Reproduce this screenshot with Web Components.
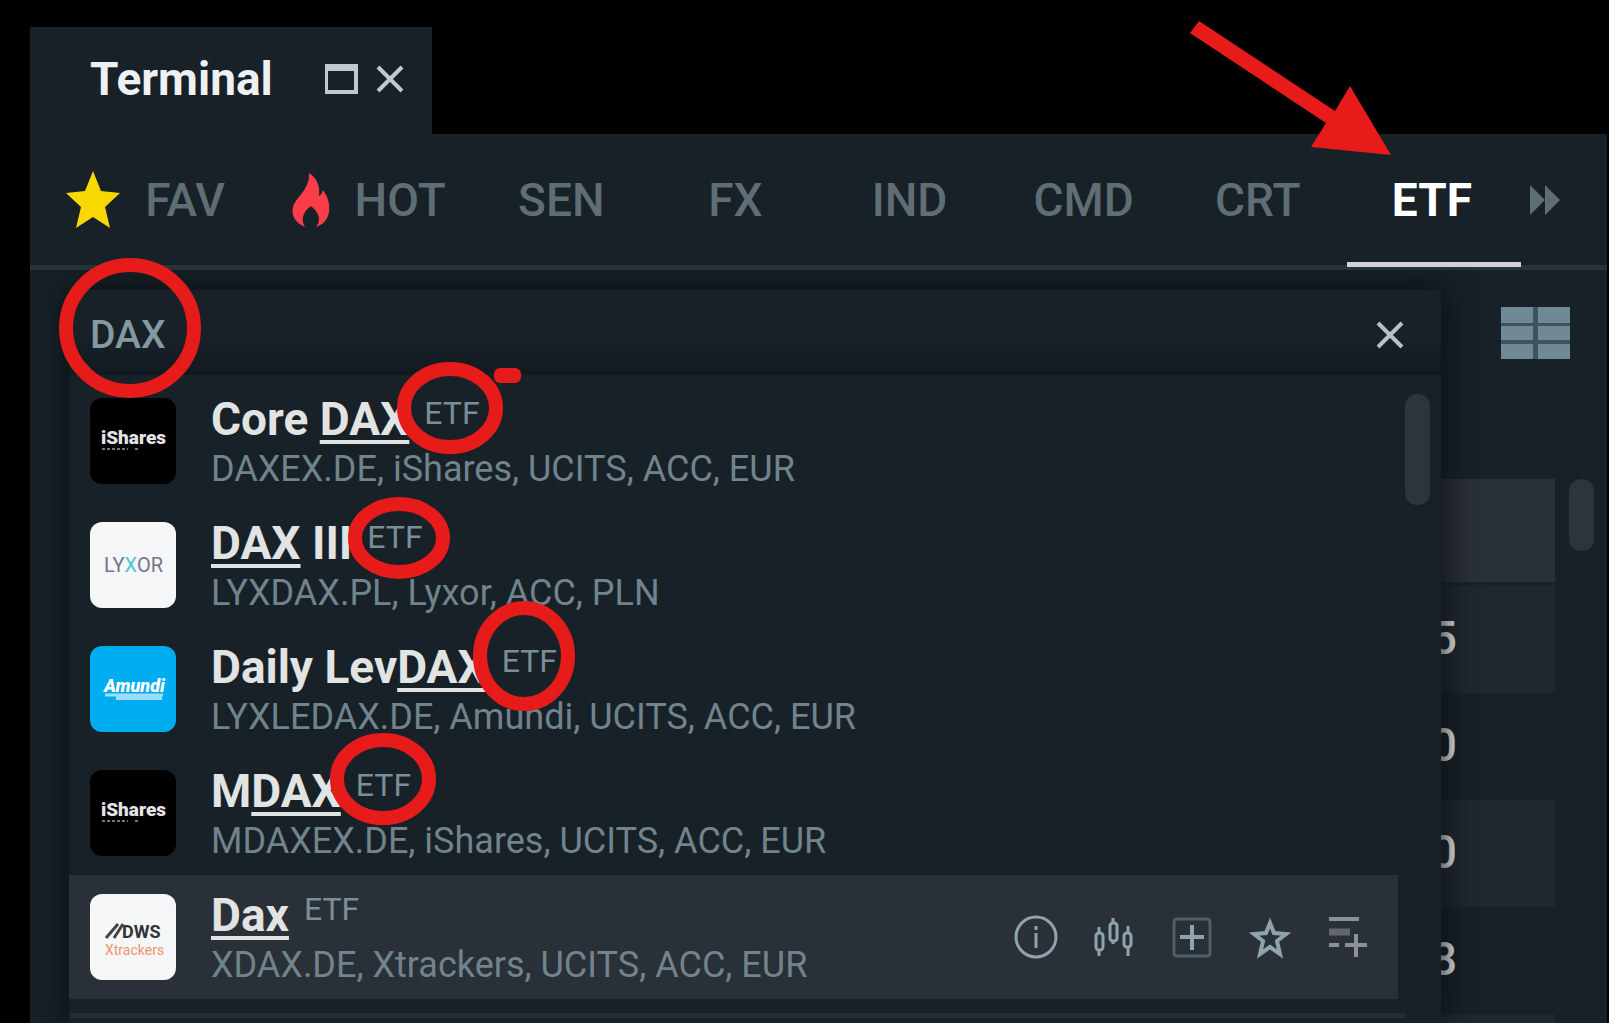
<!DOCTYPE html>
<html lang="en">
<head>
<meta charset="utf-8">
<title>Terminal</title>
<style>
    html, body{
        margin: 0;
        height: 100%;
    }
    body{
        background: #000;
        overflow: hidden;
        font-family: Roboto, "Liberation Sans", sans-serif;
    }
</style>
</head>
<body>
<terminal-window></terminal-window>

<script>
    const ICONS = {
        star: `<svg width="56" height="60" viewBox="0 0 56 60"><path fill="#f8d800" d="M28 1l8 20 19 2-15 14 5 21-17-11-17 11 5-21L1 23l19-2z"/></svg>`,
        flame: `<svg width="40" height="56" viewBox="0 0 40 56"><path fill="#fb3d4a" d="M18 1c9 6 11 14 10 23 2-1 3-3 4-6 5 7 7 14 6 22-1 7-6 13-13 15 5-6 4-14-5-21-9 6-10 15-6 21C4 51 0 43 2 35c2-9 17-17 16-34z"/></svg>`,
        close: `<svg width="28" height="28" viewBox="0 0 28 28"><path stroke="currentColor" stroke-width="4" d="M2 2l24 24M26 2L2 26"/></svg>`,
        more: `<svg width="32" height="30" viewBox="0 0 32 30"><path fill="currentColor" d="M1 0l15 15L1 30zM16 0l15 15-15 15z"/></svg>`
    };

    class terminalWindow extends HTMLElement {

        constructor() {
            super();
            this.attachShadow({ mode: "open" });
        }

        connectedCallback() {
            this.shadowRoot.innerHTML = `
            <style>
                :host{
                    display: flex;
                    flex-direction: column;
                    box-sizing: border-box;
                    height: 100vh;
                    padding: 27px 2px 0 30px;
                    overflow: hidden;
                    position: relative;
                }
                .body{
                    display: grid;
                    grid-template-columns: minmax(0, 1fr) 166px;
                    flex: 1;
                    min-height: 0;
                    background: #172127;
                }
                search-panel{
                    margin: 20px 0 0 39px;
                    z-index: 1;
                }
            </style>
            <window-title>Terminal</window-title>
            <market-tabs></market-tabs>
            <div class="body">
                <search-panel></search-panel>
                <quote-list></quote-list>
            </div>
            <marker-layer></marker-layer>`;
        }
    }

    class windowTitle extends HTMLElement {

        constructor() {
            super();
            this.attachShadow({ mode: "open" });
            this.shadowRoot.innerHTML = `
            <style>
                :host{
                    display: flex;
                    align-items: center;
                    align-self: flex-start;
                    box-sizing: border-box;
                    width: 402px;
                    height: 107px;
                    padding: 0 28px 4px 60px;
                    background: #172127;
                    color: #c3c8cb;
                }
                h1{
                    flex: 1;
                    margin: 0;
                    font-size: 46px;
                    line-height: 52px;
                    font-weight: 700;
                    color: #eef0f1;
                }
                button{
                    display: flex;
                    margin: 0 0 0 18px;
                    padding: 0;
                    border: 0;
                    background: none;
                    color: inherit;
                }
            </style>
            <h1><slot></slot></h1>
            <button aria-label="Maximize"><svg width="34" height="30" viewBox="0 0 34 30"><path fill="currentColor" fill-rule="evenodd" d="M1 0h33v30H1zM4 7v19h26V7z"/></svg></button>
            <button aria-label="Close">${ICONS.close}</button>`;
        }
    }

    class marketTabs extends HTMLElement {

        constructor() {
            super();
            this.attachShadow({ mode: "open" });
        }

        connectedCallback() {
            const tabs = ["FAV", "HOT", "SEN", "FX", "IND", "CMD", "CRT", "ETF"];
            const icons = { FAV: ICONS.star, HOT: ICONS.flame };
            this.shadowRoot.innerHTML = `
            <style>
                :host{
                    display: block;
                    background: #172127;
                }
                nav{
                    display: grid;
                    grid-template-columns: 234fr 212fr repeat(6, 174fr) 86fr;
                    height: 131px;
                    border-bottom: 5px solid #283239;
                }
                button{
                    display: flex;
                    align-items: center;
                    justify-content: center;
                    gap: 24px;
                    margin: 0 0 -5px;
                    padding: 0 4px 5px 0;
                    border: 0;
                    background: none;
                    font: 500 46px/52px Roboto, "Liberation Sans", sans-serif;
                    color: #5f6d74;
                }
                button.active{
                    font-weight: 700;
                    color: #fff;
                    background: linear-gradient(#d0d2d3, #d0d2d3) 0 128px / 100% 5px no-repeat;
                }
                .more{
                    justify-content: flex-start;
                    padding-left: 8px;
                }
            </style>
            <nav>
                ${tabs.map(t => `<button class="${t === "ETF" ? "active" : ""}">${icons[t] || ""}<span>${t}</span></button>`).join("")}
                <button class="more" aria-label="More">${ICONS.more}</button>
            </nav>`;
        }
    }

    class searchPanel extends HTMLElement {

        constructor() {
            super();
            this.attachShadow({ mode: "open" });
            this.shadowRoot.innerHTML = `
            <style>
                :host{
                    display: flex;
                    flex-direction: column;
                    background: #172127;
                    box-shadow: 0 0 30px 4px #0c1216;
                    clip-path: inset(-20px -40px 0 -39px);
                }
                .search{
                    display: flex;
                    align-items: center;
                    box-sizing: border-box;
                    height: 85px;
                    padding: 4px 37px 0 21px;
                    background: linear-gradient(#172127 55%, #111a20);
                    color: #b9bfc2;
                }
                input{
                    flex: 1;
                    min-width: 0;
                    padding: 0;
                    border: 0;
                    outline: 0;
                    background: none;
                    font: 500 39px/48px Roboto, "Liberation Sans", sans-serif;
                    color: #8599a3;
                }
                button{
                    display: flex;
                    padding: 0;
                    border: 0;
                    background: none;
                    color: inherit;
                }
                .results{
                    display: grid;
                    grid-template-columns: minmax(0, 1fr) 36px;
                    column-gap: 7px;
                    padding-top: 4px;
                }
                .thumb{
                    width: 25px;
                    height: 111px;
                    margin-top: 15px;
                    border-radius: 12px;
                    background: #2b353b;
                }
                .next{
                    height: 5px;
                    margin: 14px 36px 0 0;
                    background: #232d33;
                }
            </style>
            <div class="search">
                <input type="text" value="DAX" aria-label="Search instrument">
                <button aria-label="Clear">${ICONS.close}</button>
            </div>
            <div class="results">
                <div>
                    <result-row logo="ishares" info="DAXEX.DE, iShares, UCITS, ACC, EUR">Core <u>DAX</u></result-row>
                    <result-row logo="lyxor" info="LYXDAX.PL, Lyxor, ACC, PLN"><u>DAX</u> III</result-row>
                    <result-row logo="amundi" info="LYXLEDAX.DE, Amundi, UCITS, ACC, EUR">Daily Lev<u>DAX</u></result-row>
                    <result-row logo="ishares" info="MDAXEX.DE, iShares, UCITS, ACC, EUR">M<u>DAX</u></result-row>
                    <result-row logo="dws" info="XDAX.DE, Xtrackers, UCITS, ACC, EUR" selected><u>Dax</u></result-row>
                </div>
                <div class="thumb"></div>
            </div>
            <div class="next"></div>`;
        }
    }

    class issuerLogo extends HTMLElement {

        constructor() {
            super();
            this.attachShadow({ mode: "open" });
        }

        connectedCallback() {
            const logos = {
                ishares: { bg: "#000", art: `<text x="11" y="46" font-size="19" font-weight="900" fill="#e4e4e4">iShares</text><path stroke="#777" stroke-width="2" stroke-dasharray="3 2" d="M12 51h26M45 51h3"/>` },
                lyxor: { bg: "#f5f6f8", art: `<text x="14" y="50" font-size="20" fill="#77738f">LY<tspan fill="#52c5d8">X</tspan>OR</text>` },
                amundi: { bg: "#00adf0", art: `<text x="14" y="46" font-size="18" font-weight="900" font-style="italic" fill="#fff">Amundi</text><path stroke="#9fdcf7" stroke-width="3" d="M15 49h58"/><path stroke="#9fdcf7" stroke-width="4" d="M26 52h46"/>` },
                dws: { bg: "#f5f6f8", art: `<path stroke="#444" stroke-width="3" fill="none" d="M16 44l12-14M24 44l9-14"/><text x="32" y="44" font-size="18" font-weight="700" fill="#333">DWS</text><text x="15" y="61" font-size="14" fill="#f2936a">Xtrackers</text>` }
            };
            const logo = logos[this.getAttribute("name")];
            this.shadowRoot.innerHTML = `
            <style>
                :host{
                    display: block;
                    width: 86px;
                    height: 86px;
                    border-radius: 12px;
                    overflow: hidden;
                    background: ${logo.bg};
                }
                svg{ display: block; }
            </style>
            <svg width="86" height="86" viewBox="0 0 86 86">${logo.art}</svg>`;
        }
    }

    class resultRow extends HTMLElement {

        constructor() {
            super();
            this.attachShadow({ mode: "open" });
        }

        getActions() {
            return `
            <div class="actions">
                <button aria-label="Info"><svg viewBox="0 0 44 44"><circle cx="22" cy="22" r="20"/><path d="M22 11v4M22 18v15"/></svg></button>
                <button aria-label="Chart"><svg viewBox="0 0 44 44"><rect x="4" y="18" width="7" height="17" rx="3"/><rect x="18" y="8" width="7" height="18" rx="3"/><rect x="32" y="18" width="7" height="14" rx="3"/><path d="M7 12v6M7 35v6M21 3v5M21 26v3M36 11v7M36 32v9"/></svg></button>
                <button aria-label="Order"><svg viewBox="0 0 44 44"><rect x="4" y="4" width="36" height="37" rx="3" stroke="#4d6068"/><path stroke-width="4" d="M22 10v25M10 22h24"/></svg></button>
                <button aria-label="Favourite"><svg viewBox="0 0 44 44"><path stroke-width="4" d="M22 8l4 10 12 1-9 7 3 13-10-7-10 7 3-13-9-7 12-1z"/></svg></button>
                <button aria-label="Add to list"><svg viewBox="0 0 44 44"><path stroke="#8e9295" stroke-width="4" d="M3 4h30M3 30h10"/><path stroke="#62676b" stroke-width="7" d="M3 17h21"/><path stroke="#8e9295" stroke-width="4" d="M19 30h22M30 19v23"/></svg></button>
            </div>`;
        }

        connectedCallback() {
            this.shadowRoot.innerHTML = `
            <style>
                :host{
                    display: flex;
                    align-items: center;
                    box-sizing: border-box;
                    height: 124px;
                    padding: 0 28px 0 21px;
                    gap: 35px;
                }
                :host([selected]){
                    background: #2a3037;
                }
                .text{
                    flex: 1;
                    padding-top: 4px;
                }
                h3{
                    display: flex;
                    gap: 15px;
                    margin: 0;
                    font-size: 46px;
                    line-height: 52px;
                    font-weight: 700;
                    color: #e2e3e3;
                }
                ::slotted(u){
                    text-decoration-thickness: 4px;
                    text-underline-offset: 5px;
                    text-decoration-skip-ink: none;
                }
                small{
                    font-size: 32px;
                    line-height: 40px;
                    font-weight: 400;
                    color: #7b8e97;
                }
                p{
                    margin: 0;
                    font-size: 36px;
                    line-height: 48px;
                    color: #71838c;
                }
                .actions{
                    display: flex;
                    gap: 34px;
                }
                button{
                    display: flex;
                    padding: 0;
                    border: 0;
                    background: none;
                }
                svg{
                    width: 44px;
                    height: 44px;
                    fill: none;
                    stroke: #8ea3ad;
                    stroke-width: 3;
                }
            </style>
            <issuer-logo name="${this.getAttribute("logo")}"></issuer-logo>
            <div class="text">
                <h3><span><slot></slot></span><small>ETF</small></h3>
                <p>${this.getAttribute("info")}</p>
            </div>
            ${this.hasAttribute("selected") ? this.getActions() : ""}`;
        }
    }

    class quoteList extends HTMLElement {

        constructor() {
            super();
            this.attachShadow({ mode: "open" });
            this.shadowRoot.innerHTML = `
            <style>
                :host{
                    display: block;
                    min-height: 0;
                }
                .view{
                    display: block;
                    margin: 37px 0 0 60px;
                    padding: 0;
                    border: 0;
                    background: none;
                }
                .view svg{ display: block; }
                /* the price column runs on under the search panel */
                .quotes{
                    display: flex;
                    justify-content: space-between;
                    align-items: flex-start;
                    margin: 120px 13px 0 -12px;
                }
                table{
                    width: 126px;
                    border-spacing: 0;
                    font-size: 46px;
                    line-height: 52px;
                    font-weight: 500;
                    color: #fff;
                }
                th{
                    height: 103px;
                    padding: 0;
                    background: #2a3037;
                    border-bottom: 4px solid #1a2329;
                }
                td{
                    box-sizing: border-box;
                    height: 107px;
                    padding: 0 98px 4px 0;
                    text-align: right;
                }
                tbody tr:nth-child(odd){
                    background: #20272e;
                }
                .thumb{
                    width: 25px;
                    height: 72px;
                    border-radius: 12px;
                    background: #2b353b;
                }
            </style>
            <button class="view" aria-label="List view">
                <svg width="69" height="52" viewBox="0 0 69 52"><path fill="#42525a" d="M0 0h69v52H0z"/><path fill="#6f8a96" d="M0 0h32v16H0zM37 0h32v16H37zM0 19h32v14H0zM37 19h32v14H37zM0 37h32v15H0zM37 37h32v15H37z"/></svg>
            </button>
            <div class="quotes">
                <table>
                    <thead><tr><th></th></tr></thead>
                    <tbody>
                        <tr><td>5</td></tr>
                        <tr><td>0</td></tr>
                        <tr><td>0</td></tr>
                        <tr><td>8</td></tr>
                        <tr><td></td></tr>
                    </tbody>
                </table>
                <div class="thumb"></div>
            </div>`;
        }
    }

    //Red pen marks lying over the window
    class markerLayer extends HTMLElement {

        constructor() {
            super();
            this.attachShadow({ mode: "open" });
            this.shadowRoot.innerHTML = `
            <style>
                :host{
                    position: absolute;
                    inset: 0;
                    z-index: 2;
                    pointer-events: none;
                }
                svg{
                    display: block;
                    width: 100%;
                    height: 100%;
                }
            </style>
            <svg fill="none" stroke="#e81b1b" stroke-width="14">
                <ellipse cx="130" cy="328" rx="64" ry="63"/>
                <ellipse cx="450" cy="408" rx="46" ry="39"/>
                <ellipse cx="399" cy="538" rx="44" ry="34"/>
                <ellipse cx="524" cy="656" rx="44" ry="48"/>
                <ellipse cx="383" cy="779" rx="46" ry="39"/>
                <rect x="494" y="368" width="27" height="15" rx="6" fill="#e81b1b" stroke="none"/>
                <path d="M1199 21l136 90 15-25 41 69-80-8 15-24-136-90z" fill="#e81b1b" stroke="none"/>
            </svg>`;
        }
    }

    customElements.define("issuer-logo", issuerLogo);
    customElements.define("result-row", resultRow);
    customElements.define("window-title", windowTitle);
    customElements.define("market-tabs", marketTabs);
    customElements.define("search-panel", searchPanel);
    customElements.define("quote-list", quoteList);
    customElements.define("marker-layer", markerLayer);
    customElements.define("terminal-window", terminalWindow);
</script>
</body>
</html>
